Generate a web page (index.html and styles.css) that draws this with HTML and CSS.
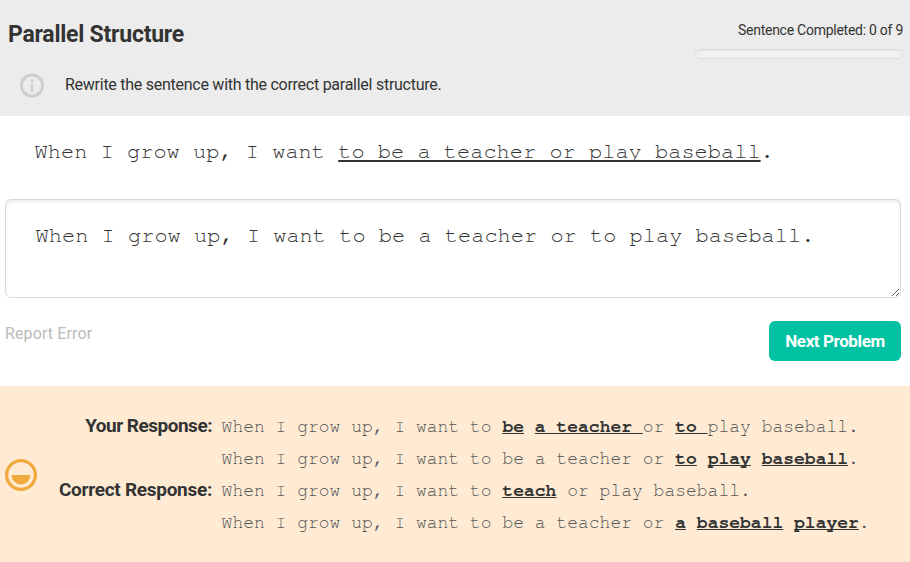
FILE: index.html
```html
<!DOCTYPE html>
<html lang="en">
<head>
<meta charset="utf-8">
<title>Parallel Structure</title>
<link rel="stylesheet" href="styles.css">
</head>
<body>
<header class="header">
  <div class="heading-row">
    <h1 class="title">Parallel Structure</h1>
    <div class="progress">
      <span class="progress-label">Sentence Completed: 0 of 9</span>
      <div class="progress-track"></div>
    </div>
  </div>
  <div class="instructions">
    <svg class="info-icon" viewBox="0 0 24 24"><circle cx="12" cy="12" r="10.6" fill="none" stroke="#cdcdcd" stroke-width="2.8"/><circle cx="12" cy="7.2" r="1.5" fill="#cdcdcd"/><path d="M12 10.2v8" stroke="#cdcdcd" stroke-width="2.4"/></svg>
    <p class="instruction-text">Rewrite the sentence with the correct parallel structure.</p>
  </div>
</header>
<main>
  <p class="prompt">When I grow up, I want <u>to be a teacher or play baseball</u>.</p>
  <textarea class="answer" spellcheck="false">When I grow up, I want to be a teacher or to play baseball.</textarea>
  <div class="actions">
    <a class="report">Report Error</a>
    <button class="next"><span class="next-label">Next Problem</span></button>
  </div>
</main>
<section class="feedback">
  <svg class="face" viewBox="0 0 32 32"><circle cx="16" cy="16" r="14.4" fill="none" stroke="#f0a93c" stroke-width="3.2"/><path d="M6.6 16h18.8a9.4 9.4 0 0 1-18.8 0z" fill="#f0a93c"/></svg>
  <div class="responses">
    <span class="label your">Your Response:</span>
    <p class="sentence">When I grow up, I want to <b>be</b> <b>a teacher </b>or <b>to </b>play baseball.</p>
    <p class="sentence second">When I grow up, I want to be a teacher or <b>to</b> <b>play</b> <b>baseball</b>.</p>
    <span class="label correct">Correct Response:</span>
    <p class="sentence">When I grow up, I want to <b>teach</b> or play baseball.</p>
    <p class="sentence second">When I grow up, I want to be a teacher or <b>a</b> <b>baseball</b> <b>player</b>.</p>
  </div>
</section>
</body>
</html>
```

FILE: styles.css
```css
* { box-sizing: border-box; }
body { margin: 0; background: #fff; color: #333; font-family: Roboto, "Liberation Sans", sans-serif; }
p, h1 { margin: 0; }
.header { height: 116px; background: #ececec; padding: 20px 7px 0 8px; }
.heading-row { display: flex; justify-content: space-between; height: 53px; }
.title { font-size: 23px; line-height: 29px; font-weight: 700; letter-spacing: -0.24px; white-space: nowrap; }
.progress { width: 208px; text-align: right; }
.progress-label { display: block; font-size: 14px; line-height: 21px; letter-spacing: -0.26px; white-space: nowrap; }
.progress-track { height: 10px; margin-top: 8px; border: 1px solid #dedede; border-radius: 5px; background: #f1f1f1; box-shadow: inset 0 1px 1px #e3e3e3; }
.instructions { display: flex; align-items: flex-start; padding-left: 12px; gap: 21px; }
.info-icon { width: 24px; height: 25px; flex: none; }
.instruction-text { font-size: 16px; line-height: 24px; letter-spacing: -0.26px; white-space: nowrap; }
main { height: 270px; padding: 19px 9px 0 5px; }
.prompt, .answer { font-family: "Nimbus Mono PS", FreeMono, "Liberation Mono", monospace; font-size: 22px; line-height: 32px; font-weight: 400; color: #333; }
.prompt { padding-left: 29.6px; white-space: nowrap; }
.prompt u, .sentence b { text-decoration: underline; text-decoration-skip-ink: none; }
.answer { display: block; width: 896px; height: 99px; margin: 32px 0 0; padding: 19px 29.6px; border: 1px solid #d8d8d8; border-radius: 6px; box-shadow: inset 0 2px 3px #eee; outline: none; resize: both; overflow: auto; }
.actions { display: flex; justify-content: space-between; align-items: flex-start; margin-top: 23px; }
.report { font-size: 16px; line-height: 24px; padding-top: 1px; letter-spacing: 0.12px; color: #bbb; }
.next { width: 132px; height: 40px; padding: 0; border: 0; border-radius: 6px; background: #00c2a2; color: #fff; font-family: inherit; font-size: 17px; font-weight: 700; letter-spacing: -0.4px; white-space: nowrap; }
.feedback { display: flex; height: 176px; padding: 25px 5px 0; background: #ffebd3; }
.face { width: 32px; height: 32px; margin-top: 48px; flex: none; }
.responses { display: grid; grid-template-columns: 175px 1fr; grid-auto-rows: 32px; column-gap: 9.6px; }
.label { font-size: 19px; line-height: 30px; font-weight: 700; text-align: right; letter-spacing: -0.5px; white-space: nowrap; }
.correct { letter-spacing: -0.28px; }
.sentence { font-family: "Nimbus Mono PS", FreeMono, "Liberation Mono", monospace; font-size: 18px; line-height: 32px; color: #555; white-space: nowrap; }
.sentence b { color: #333; }
.second { grid-column: 2; }
```
